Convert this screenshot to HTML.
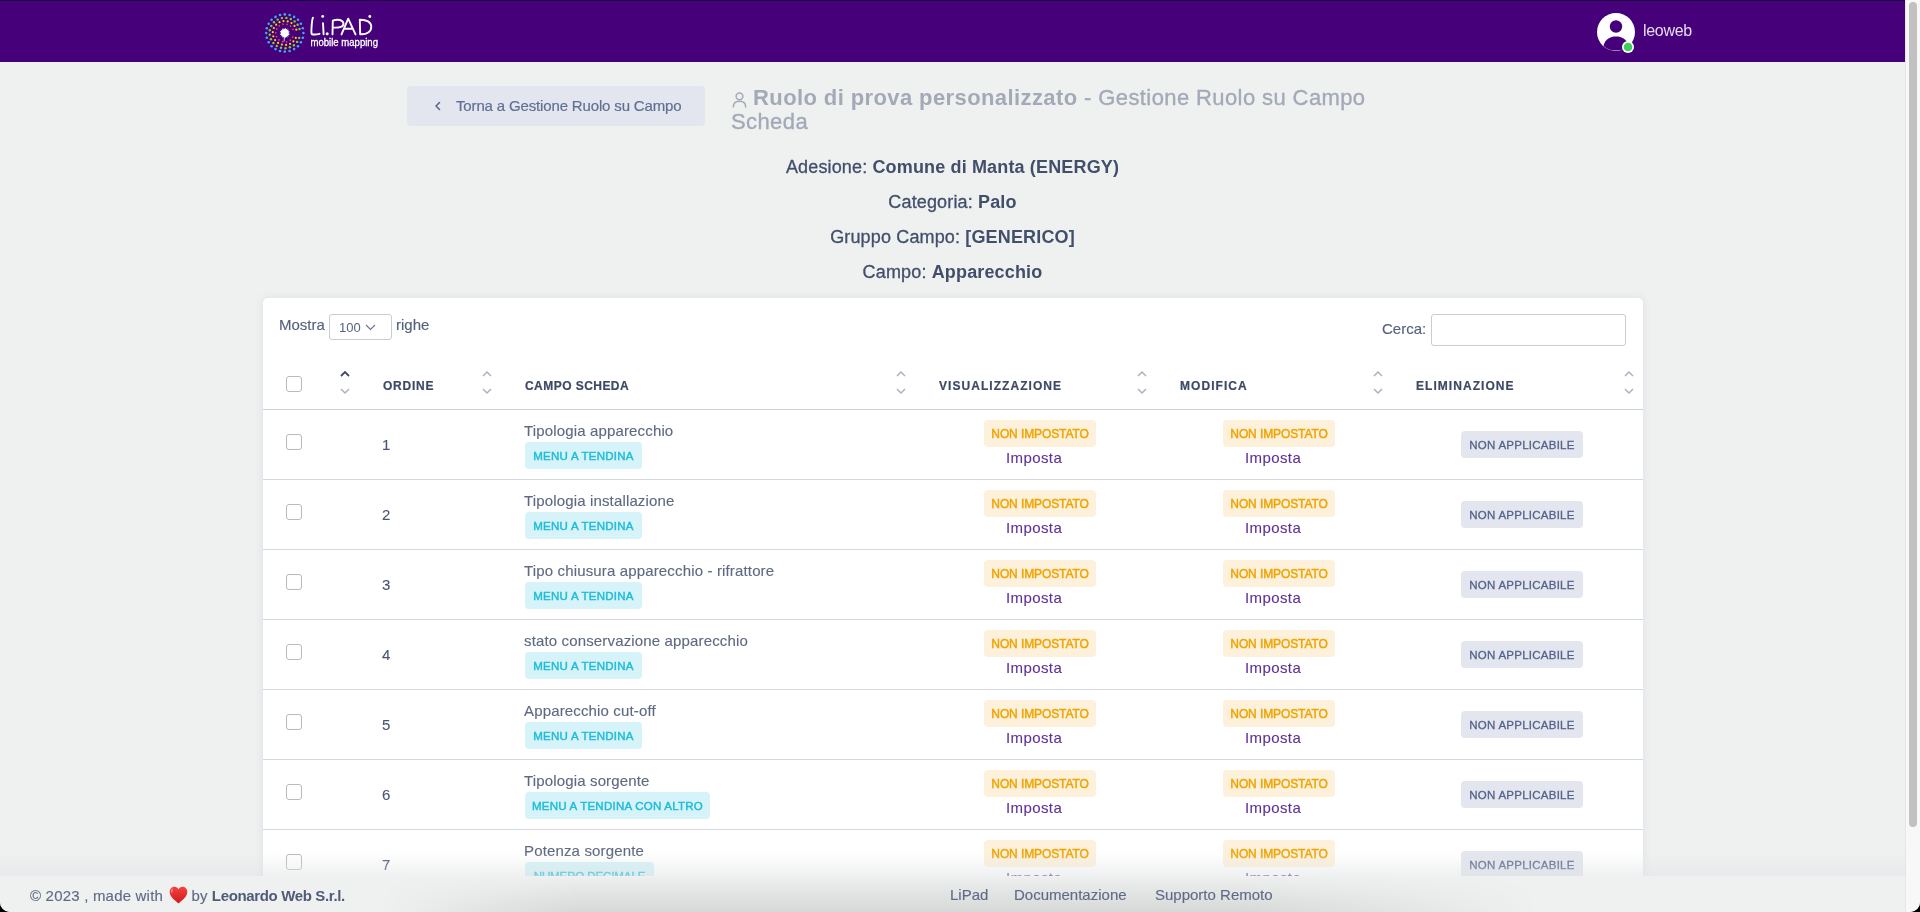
<!DOCTYPE html>
<html><head><meta charset="utf-8"><title>LiPad</title>
<style>
*{box-sizing:border-box;margin:0;padding:0}
html,body{width:1920px;height:912px;overflow:hidden;background:#000}
body{font-family:"Liberation Sans",sans-serif;position:relative}
#win{position:absolute;left:0;top:0;width:1920px;height:912px;background:#eff1f1;overflow:hidden;border-radius:0 0 10px 10px;will-change:transform}
.abs{position:absolute;white-space:nowrap}
#hdr{position:absolute;left:0;top:0;width:1905px;height:62px;background:#45007a;border-top:1px solid #1d0a45}
#sb{position:absolute;left:1905px;top:0;width:15px;height:912px;background:#f8f8f8;border-left:1px solid #e6e6e6}
#thumb{position:absolute;left:3px;top:2px;width:8px;height:825px;background:#c1c1c1;border-radius:4px}
#content{position:absolute;left:0;top:0;width:1905px;height:876px;overflow:hidden}
.btn-back{left:407px;top:86px;width:298px;height:40px;background:#e3e6ee;border-radius:4px}
.btn-back .chev{position:absolute;left:27px;top:15px}
.btxt{position:absolute;left:49px;top:11px;font-size:15px;color:#607095;letter-spacing:-0.15px;-webkit-text-stroke:0.2px #607095}
.title{left:731px;top:86px;-webkit-text-stroke:0.35px #a3a9b7;font-size:22px;line-height:24px;color:#a3a9b7;font-weight:normal;letter-spacing:0.4px}
.title b{font-weight:bold;-webkit-text-stroke:0}
.uicon{display:inline-block;vertical-align:-3px;margin-right:5px}
.info{-webkit-text-stroke:0.3px #424e6a;left:0;width:1905px;text-align:center;font-size:18px;line-height:22px;color:#424e6a;letter-spacing:0.15px}
.info b{font-weight:bold;-webkit-text-stroke:0}
#card{position:absolute;left:263px;top:298px;width:1380px;height:700px;background:#fff;border-radius:5px;box-shadow:0 0 8px rgba(60,70,90,0.10)}
.mostra{left:16px;top:18px;font-size:15px;color:#55627e;-webkit-text-stroke:0.15px #55627e}
.sel{left:66px;top:16px;width:63px;height:26px;border:1px solid #c8ccd6;border-radius:3px}
.sel span{position:absolute;left:9px;top:5px;font-size:13px;color:#55627e}
.sel svg{position:absolute;left:35px;top:9px}
.righe{left:133px;top:18px;font-size:15px;color:#55627e;-webkit-text-stroke:0.15px #55627e}
.cerca{left:1119px;top:22px;font-size:15px;color:#55627e;-webkit-text-stroke:0.15px #55627e}
.search{left:1168px;top:16px;width:195px;height:32px;border:1px solid #c8ccd6;border-radius:3px}
.cb{width:16px;height:16px;border:1px solid #b9b9b9;border-radius:3px;background:#fff}
.sort{top:72px}
.th{top:81px;font-size:12px;font-weight:bold;letter-spacing:1.05px;color:#3e4966;-webkit-text-stroke:0.2px #3e4966}
.th.cs{letter-spacing:0.45px}
.th.ord{letter-spacing:0.75px}
.hline{left:0;width:1380px;height:1px;background:#cdd1da}
.row{position:absolute;left:0;width:1380px;height:70px}
.rline{left:0;top:69px;width:1380px;height:1px;background:#d5d8e1}
.num{left:119px;top:26px;font-size:15px;color:#4a5572;-webkit-text-stroke:0.1px #4a5572}
.nm{left:261px;top:12px;font-size:15px;color:#5e6982;-webkit-text-stroke:0.12px #5e6982;letter-spacing:0.15px}
.bcyan{left:262px;top:32px;height:27px;text-align:center;line-height:28px;border-radius:4px;background:#d5f3f8;color:#1fbcd9;font-size:11.5px;font-weight:normal;-webkit-text-stroke:0.45px #1fbcd9;letter-spacing:0.25px}
.byel{top:10px;width:112px;height:27px;text-align:center;line-height:28px;border-radius:4px;background:#fdf1dc;color:#f0a400;font-size:12px;font-weight:normal;-webkit-text-stroke:0.45px #f0a400;letter-spacing:-0.1px}
.imp{top:39px;font-size:15px;color:#5f3198;letter-spacing:0.4px;-webkit-text-stroke:0.1px #5f3198}
.bgray{left:1198px;top:21px;width:122px;height:27px;text-align:center;line-height:28px;border-radius:4px;background:#e3e6ee;color:#53638a;font-size:11.5px;-webkit-text-stroke:0.3px #53638a;letter-spacing:0.25px}
#fade{position:absolute;left:0;top:852px;width:1905px;height:24px;background:linear-gradient(to bottom,rgba(228,230,232,0),rgba(224,226,228,0.5))}
#fshadow{position:absolute;left:380px;top:0;width:1160px;height:36px;background:linear-gradient(to bottom,rgba(0,0,0,0),rgba(0,0,0,0.10));-webkit-mask-image:linear-gradient(to right,transparent,#000 200px,#000 calc(100% - 300px),transparent)}
#footer{position:absolute;left:0;top:876px;width:1905px;height:36px;background:#eff1f1}
.ftl{left:30px;top:10px;font-size:15px;color:#5f6b86;-webkit-text-stroke:0.15px #5f6b86}
.ftl b{color:#4f5b78;letter-spacing:-0.35px;-webkit-text-stroke:0}
.ftr{letter-spacing:0.2px}
.heart{display:inline-block;width:19px;margin:0 -1px 0 2px}
.heart svg{vertical-align:-3px}
.flink{top:10px;font-size:15px;color:#5f6b86;-webkit-text-stroke:0.15px #5f6b86}
.logo{left:265px;top:12px;width:130px;height:50px}
.avatar{left:1597px;top:12px}
.uname{left:1643px;top:21px;font-size:16px;color:#e3dcef;letter-spacing:-0.3px}

</style></head>
<body>
<div id="win">
<div id="content">
  <div class="abs btn-back"><svg class="chev" width="8" height="10" viewBox="0 0 8 10"><path d="M5.5 1.5 L2 5 L5.5 8.5" fill="none" stroke="#5d6b8c" stroke-width="1.6" stroke-linecap="round" stroke-linejoin="round"/></svg><span class="btxt">Torna a Gestione Ruolo su Campo</span></div>
  <div class="abs title"><svg class="uicon" width="17" height="17" viewBox="0 0 16 16"><circle cx="8" cy="5" r="3.2" fill="none" stroke="#a3a9b7" stroke-width="1.4"/><path d="M2.2 15 C2.2 11 4.8 9.6 8 9.6 C11.2 9.6 13.8 11 13.8 15" fill="none" stroke="#a3a9b7" stroke-width="1.4" stroke-linecap="round"/></svg><b>Ruolo di prova personalizzato</b> - Gestione Ruolo su Campo<br>Scheda</div>
  <div class="abs info" style="top:156px">Adesione: <b>Comune di Manta (ENERGY)</b></div>
  <div class="abs info" style="top:191px">Categoria: <b>Palo</b></div>
  <div class="abs info" style="top:226px">Gruppo Campo: <b>[GENERICO]</b></div>
  <div class="abs info" style="top:261px">Campo: <b>Apparecchio</b></div>
  <div id="card">
    <div class="abs mostra">Mostra</div>
    <div class="abs sel"><span>100</span><svg width="11" height="7" viewBox="0 0 11 7"><path d="M1 1 L5.5 5.5 L10 1" fill="none" stroke="#6b7590" stroke-width="1.1"/></svg></div>
    <div class="abs righe">righe</div>
    <div class="abs cerca">Cerca:</div>
    <div class="abs search"></div>

<div class="abs cb" style="left:23px;top:78px"></div>
<svg class="abs sort" style="left:77px" width="10" height="25" viewBox="0 0 10 25"><path d="M1 6 L5 2 L9 6" fill="none" stroke="#3e4966" stroke-width="1.8"/><path d="M1 19 L5 23 L9 19" fill="none" stroke="#a9b0bf" stroke-width="1.45"/></svg>
<div class="abs th ord" style="left:120px">ORDINE</div>
<svg class="abs sort" style="left:219px" width="10" height="25" viewBox="0 0 10 25"><path d="M1 6 L5 2 L9 6" fill="none" stroke="#a9b0bf" stroke-width="1.45"/><path d="M1 19 L5 23 L9 19" fill="none" stroke="#a9b0bf" stroke-width="1.45"/></svg>
<div class="abs th cs" style="left:262px">CAMPO SCHEDA</div>
<svg class="abs sort" style="left:633px" width="10" height="25" viewBox="0 0 10 25"><path d="M1 6 L5 2 L9 6" fill="none" stroke="#a9b0bf" stroke-width="1.45"/><path d="M1 19 L5 23 L9 19" fill="none" stroke="#a9b0bf" stroke-width="1.45"/></svg>
<div class="abs th" style="left:676px">VISUALIZZAZIONE</div>
<svg class="abs sort" style="left:874px" width="10" height="25" viewBox="0 0 10 25"><path d="M1 6 L5 2 L9 6" fill="none" stroke="#a9b0bf" stroke-width="1.45"/><path d="M1 19 L5 23 L9 19" fill="none" stroke="#a9b0bf" stroke-width="1.45"/></svg>
<div class="abs th" style="left:917px">MODIFICA</div>
<svg class="abs sort" style="left:1110px" width="10" height="25" viewBox="0 0 10 25"><path d="M1 6 L5 2 L9 6" fill="none" stroke="#a9b0bf" stroke-width="1.45"/><path d="M1 19 L5 23 L9 19" fill="none" stroke="#a9b0bf" stroke-width="1.45"/></svg>
<div class="abs th" style="left:1153px">ELIMINAZIONE</div>
<svg class="abs sort" style="left:1361px" width="10" height="25" viewBox="0 0 10 25"><path d="M1 6 L5 2 L9 6" fill="none" stroke="#a9b0bf" stroke-width="1.45"/><path d="M1 19 L5 23 L9 19" fill="none" stroke="#a9b0bf" stroke-width="1.45"/></svg>
<div class="abs hline" style="top:111px"></div>
<div class="row" style="top:112px">
<div class="abs cb" style="left:23px;top:24px"></div>
<div class="abs num">1</div>
<div class="abs nm">Tipologia apparecchio</div>
<div class="abs bcyan" style="width:117px">MENU A TENDINA</div>
<div class="abs byel" style="left:721px">NON IMPOSTATO</div>
<div class="abs imp" style="left:743px">Imposta</div>
<div class="abs byel" style="left:960px">NON IMPOSTATO</div>
<div class="abs imp" style="left:982px">Imposta</div>
<div class="abs bgray">NON APPLICABILE</div>
<div class="abs rline"></div>
</div>
<div class="row" style="top:182px">
<div class="abs cb" style="left:23px;top:24px"></div>
<div class="abs num">2</div>
<div class="abs nm">Tipologia installazione</div>
<div class="abs bcyan" style="width:117px">MENU A TENDINA</div>
<div class="abs byel" style="left:721px">NON IMPOSTATO</div>
<div class="abs imp" style="left:743px">Imposta</div>
<div class="abs byel" style="left:960px">NON IMPOSTATO</div>
<div class="abs imp" style="left:982px">Imposta</div>
<div class="abs bgray">NON APPLICABILE</div>
<div class="abs rline"></div>
</div>
<div class="row" style="top:252px">
<div class="abs cb" style="left:23px;top:24px"></div>
<div class="abs num">3</div>
<div class="abs nm">Tipo chiusura apparecchio - rifrattore</div>
<div class="abs bcyan" style="width:117px">MENU A TENDINA</div>
<div class="abs byel" style="left:721px">NON IMPOSTATO</div>
<div class="abs imp" style="left:743px">Imposta</div>
<div class="abs byel" style="left:960px">NON IMPOSTATO</div>
<div class="abs imp" style="left:982px">Imposta</div>
<div class="abs bgray">NON APPLICABILE</div>
<div class="abs rline"></div>
</div>
<div class="row" style="top:322px">
<div class="abs cb" style="left:23px;top:24px"></div>
<div class="abs num">4</div>
<div class="abs nm">stato conservazione apparecchio</div>
<div class="abs bcyan" style="width:117px">MENU A TENDINA</div>
<div class="abs byel" style="left:721px">NON IMPOSTATO</div>
<div class="abs imp" style="left:743px">Imposta</div>
<div class="abs byel" style="left:960px">NON IMPOSTATO</div>
<div class="abs imp" style="left:982px">Imposta</div>
<div class="abs bgray">NON APPLICABILE</div>
<div class="abs rline"></div>
</div>
<div class="row" style="top:392px">
<div class="abs cb" style="left:23px;top:24px"></div>
<div class="abs num">5</div>
<div class="abs nm">Apparecchio cut-off</div>
<div class="abs bcyan" style="width:117px">MENU A TENDINA</div>
<div class="abs byel" style="left:721px">NON IMPOSTATO</div>
<div class="abs imp" style="left:743px">Imposta</div>
<div class="abs byel" style="left:960px">NON IMPOSTATO</div>
<div class="abs imp" style="left:982px">Imposta</div>
<div class="abs bgray">NON APPLICABILE</div>
<div class="abs rline"></div>
</div>
<div class="row" style="top:462px">
<div class="abs cb" style="left:23px;top:24px"></div>
<div class="abs num">6</div>
<div class="abs nm">Tipologia sorgente</div>
<div class="abs bcyan" style="width:185px">MENU A TENDINA CON ALTRO</div>
<div class="abs byel" style="left:721px">NON IMPOSTATO</div>
<div class="abs imp" style="left:743px">Imposta</div>
<div class="abs byel" style="left:960px">NON IMPOSTATO</div>
<div class="abs imp" style="left:982px">Imposta</div>
<div class="abs bgray">NON APPLICABILE</div>
<div class="abs rline"></div>
</div>
<div class="row" style="top:532px">
<div class="abs cb" style="left:23px;top:24px"></div>
<div class="abs num">7</div>
<div class="abs nm">Potenza sorgente</div>
<div class="abs bcyan" style="width:129px;letter-spacing:-0.1px">NUMERO DECIMALE</div>
<div class="abs byel" style="left:721px">NON IMPOSTATO</div>
<div class="abs imp" style="left:743px">Imposta</div>
<div class="abs byel" style="left:960px">NON IMPOSTATO</div>
<div class="abs imp" style="left:982px">Imposta</div>
<div class="abs bgray">NON APPLICABILE</div>
<div class="abs rline"></div>
</div>
  </div>
</div>
<div id="fade"></div>
<div id="footer"><div id="fshadow"></div>
  <div class="abs ftl"><span class="ftr">&copy; 2023 , made with</span> <span class="heart"><svg width="19" height="18" viewBox="0 0 20 19"><defs><linearGradient id="hg" x1="0" y1="0" x2="0" y2="1"><stop offset="0" stop-color="#f5413f"/><stop offset="1" stop-color="#d01a1e"/></linearGradient></defs><path d="M10 18.4 C4.2 13.8 0.7 10.6 0.7 6.1 C0.7 2.9 3.1 0.7 5.9 0.7 C7.7 0.7 9.1 1.7 10 3.3 C10.9 1.7 12.3 0.7 14.1 0.7 C16.9 0.7 19.3 2.9 19.3 6.1 C19.3 10.6 15.8 13.8 10 18.4 Z" fill="url(#hg)"/><path d="M3.6 3.6 C2.8 4.4 2.6 5.6 3 6.6" fill="none" stroke="#ff9a9a" stroke-width="1.1" stroke-linecap="round"/></svg></span> <span class="ftr">by</span> <b>Leonardo Web S.r.l.</b></div>
  <div class="abs flink" style="left:950px">LiPad</div>
  <div class="abs flink" style="left:1014px">Documentazione</div>
  <div class="abs flink" style="left:1155px">Supporto Remoto</div>
</div>
<div id="hdr">
  <div class="abs logo"><svg width="130" height="50" viewBox="0 0 130 50"><circle cx="38.4" cy="20.0" r="1.3" fill="#3fa9f5"/><circle cx="37.8" cy="24.8" r="1.3" fill="#3fa9f5"/><circle cx="35.9" cy="29.3" r="1.3" fill="#3fa9f5"/><circle cx="33.0" cy="33.2" r="1.3" fill="#3fa9f5"/><circle cx="29.1" cy="36.1" r="1.3" fill="#3fa9f5"/><circle cx="24.6" cy="38.0" r="1.3" fill="#3fa9f5"/><circle cx="19.8" cy="38.6" r="1.3" fill="#3fa9f5"/><circle cx="15.0" cy="38.0" r="1.3" fill="#3fa9f5"/><circle cx="10.5" cy="36.1" r="1.3" fill="#3fa9f5"/><circle cx="6.6" cy="33.2" r="1.3" fill="#3fa9f5"/><circle cx="3.7" cy="29.3" r="1.3" fill="#3fa9f5"/><circle cx="1.8" cy="24.8" r="1.3" fill="#3fa9f5"/><circle cx="1.2" cy="20.0" r="1.3" fill="#3fa9f5"/><circle cx="1.8" cy="15.2" r="1.3" fill="#3fa9f5"/><circle cx="3.7" cy="10.7" r="1.3" fill="#3fa9f5"/><circle cx="6.6" cy="6.8" r="1.3" fill="#3fa9f5"/><circle cx="10.5" cy="3.9" r="1.3" fill="#3fa9f5"/><circle cx="15.0" cy="2.0" r="1.3" fill="#3fa9f5"/><circle cx="19.8" cy="1.4" r="1.3" fill="#3fa9f5"/><circle cx="24.6" cy="2.0" r="1.3" fill="#3fa9f5"/><circle cx="29.1" cy="3.9" r="1.3" fill="#3fa9f5"/><circle cx="33.0" cy="6.8" r="1.3" fill="#3fa9f5"/><circle cx="35.9" cy="10.7" r="1.3" fill="#3fa9f5"/><circle cx="37.8" cy="15.2" r="1.3" fill="#3fa9f5"/><circle cx="34.2" cy="24.9" r="1.2" fill="#7ed321"/><circle cx="32.1" cy="28.9" r="1.2" fill="#7ed321"/><circle cx="28.9" cy="32.2" r="1.2" fill="#7ed321"/><circle cx="24.9" cy="34.3" r="1.2" fill="#7ed321"/><circle cx="20.5" cy="35.2" r="1.2" fill="#7ed321"/><circle cx="16.0" cy="34.7" r="1.2" fill="#7ed321"/><circle cx="11.8" cy="32.9" r="1.2" fill="#7ed321"/><circle cx="8.4" cy="30.0" r="1.2" fill="#7ed321"/><circle cx="5.9" cy="26.2" r="1.2" fill="#7ed321"/><circle cx="4.7" cy="21.8" r="1.2" fill="#7ed321"/><circle cx="4.8" cy="17.3" r="1.2" fill="#7ed321"/><circle cx="6.3" cy="13.0" r="1.2" fill="#7ed321"/><circle cx="9.0" cy="9.3" r="1.2" fill="#7ed321"/><circle cx="12.6" cy="6.6" r="1.2" fill="#7ed321"/><circle cx="16.9" cy="5.1" r="1.2" fill="#7ed321"/><circle cx="21.4" cy="4.9" r="1.2" fill="#7ed321"/><circle cx="25.8" cy="6.0" r="1.2" fill="#7ed321"/><circle cx="29.6" cy="8.4" r="1.2" fill="#7ed321"/><circle cx="32.6" cy="11.8" r="1.2" fill="#7ed321"/><circle cx="34.5" cy="16.0" r="1.2" fill="#7ed321"/><circle cx="30.8" cy="24.9" r="1.1" fill="#f5d01e"/><circle cx="28.4" cy="28.3" r="1.1" fill="#f5d01e"/><circle cx="25.1" cy="30.8" r="1.1" fill="#f5d01e"/><circle cx="21.1" cy="31.9" r="1.1" fill="#f5d01e"/><circle cx="16.9" cy="31.6" r="1.1" fill="#f5d01e"/><circle cx="13.1" cy="29.9" r="1.1" fill="#f5d01e"/><circle cx="10.1" cy="27.1" r="1.1" fill="#f5d01e"/><circle cx="8.3" cy="23.3" r="1.1" fill="#f5d01e"/><circle cx="7.8" cy="19.2" r="1.1" fill="#f5d01e"/><circle cx="8.8" cy="15.1" r="1.1" fill="#f5d01e"/><circle cx="11.2" cy="11.7" r="1.1" fill="#f5d01e"/><circle cx="14.5" cy="9.2" r="1.1" fill="#f5d01e"/><circle cx="18.5" cy="8.1" r="1.1" fill="#f5d01e"/><circle cx="22.7" cy="8.4" r="1.1" fill="#f5d01e"/><circle cx="26.5" cy="10.1" r="1.1" fill="#f5d01e"/><circle cx="29.5" cy="12.9" r="1.1" fill="#f5d01e"/><circle cx="31.3" cy="16.7" r="1.1" fill="#f5d01e"/><circle cx="27.8" cy="24.1" r="0.85" fill="#f0484e"/><circle cx="25.3" cy="27.2" r="0.85" fill="#f0484e"/><circle cx="21.6" cy="28.8" r="0.85" fill="#f0484e"/><circle cx="17.6" cy="28.7" r="0.85" fill="#f0484e"/><circle cx="14.0" cy="26.9" r="0.85" fill="#f0484e"/><circle cx="11.6" cy="23.7" r="0.85" fill="#f0484e"/><circle cx="10.8" cy="19.8" r="0.85" fill="#f0484e"/><circle cx="11.8" cy="15.9" r="0.85" fill="#f0484e"/><circle cx="14.3" cy="12.8" r="0.85" fill="#f0484e"/><circle cx="18.0" cy="11.2" r="0.85" fill="#f0484e"/><circle cx="22.0" cy="11.3" r="0.85" fill="#f0484e"/><circle cx="25.6" cy="13.1" r="0.85" fill="#f0484e"/><circle cx="28.0" cy="16.3" r="0.85" fill="#f0484e"/><polygon points="25.2,20.0 23.4,20.6 24.9,21.8 23.0,21.9 23.9,23.5 22.2,22.8 22.5,24.7 21.1,23.5 20.7,25.3 19.8,23.7 18.9,25.3 18.5,23.5 17.1,24.7 17.4,22.8 15.7,23.5 16.6,21.9 14.7,21.8 16.2,20.6 14.4,20.0 16.2,19.4 14.7,18.2 16.6,18.1 15.7,16.5 17.4,17.2 17.1,15.3 18.5,16.5 18.9,14.7 19.8,16.3 20.7,14.7 21.1,16.5 22.5,15.3 22.2,17.2 23.9,16.5 23.0,18.2 24.9,18.2 23.4,19.4" fill="#fff"/><path d="M19.5 24 L19 28.5" stroke="#fff" stroke-width="0.8"/><g transform="translate(0,-1.8)"><path d="M48 6.5 C47.6 7 46.8 12 46.5 17 C46.3 20 46.3 22 46.8 23 C49 23.4 52 23.2 54.5 22.6" fill="none" stroke="#fff" stroke-width="1.9" stroke-linecap="round" stroke-linejoin="round"/><path d="M58 12 C58.3 16 58.4 20 58.6 23" fill="none" stroke="#fff" stroke-width="1.9" stroke-linecap="round" stroke-linejoin="round"/><circle cx="57.7" cy="5.2" r="1.4" fill="#fff"/><circle cx="62.2" cy="22.6" r="1.5" fill="#fff"/><path d="M67.5 23.2 L67.8 9.5 C72.5 7.6 78.3 8.6 78.5 12.6 C78.6 16.2 72.8 16.8 68 16.3" fill="none" stroke="#fff" stroke-width="1.9" stroke-linecap="round" stroke-linejoin="round"/><path d="M76.5 23.2 L83.2 7.5 L90.5 23.2 M79.6 17.5 L87.8 17.5" fill="none" stroke="#fff" stroke-width="1.9" stroke-linecap="round" stroke-linejoin="round"/><path d="M94.8 8.5 L95.2 23 C101.8 23.6 106.3 20.4 106.3 15.6 C106.3 10.8 101.5 8.3 94.8 8.5" fill="none" stroke="#fff" stroke-width="1.9" stroke-linecap="round" stroke-linejoin="round"/><circle cx="104.8" cy="5.3" r="1.4" fill="#fff"/></g><text x="45.5" y="32.6" font-family="Liberation Sans" font-size="10.8" fill="#fff" stroke="#fff" stroke-width="0.3" textLength="67.5" lengthAdjust="spacingAndGlyphs">mobile mapping</text></svg></div>
  <div class="abs avatar"><svg width="40" height="42" viewBox="0 0 40 42"><circle cx="19" cy="19" r="19" fill="#fff"/><circle cx="19" cy="13.5" r="6.2" fill="#45007a"/><path d="M6.5 33 C8 26 13 23.5 19 23.5 C25 23.5 30 26 31.5 33 C28.5 36 24 37.5 19 37.5 C14 37.5 9.5 36 6.5 33 Z" fill="#45007a"/><circle cx="31" cy="34" r="6" fill="#fff"/><circle cx="31" cy="34" r="4.3" fill="#3ccf5a"/></svg></div>
  <div class="abs uname">leoweb</div>
</div>
<div id="sb"><div id="thumb"></div></div>
</div>
</body></html>
